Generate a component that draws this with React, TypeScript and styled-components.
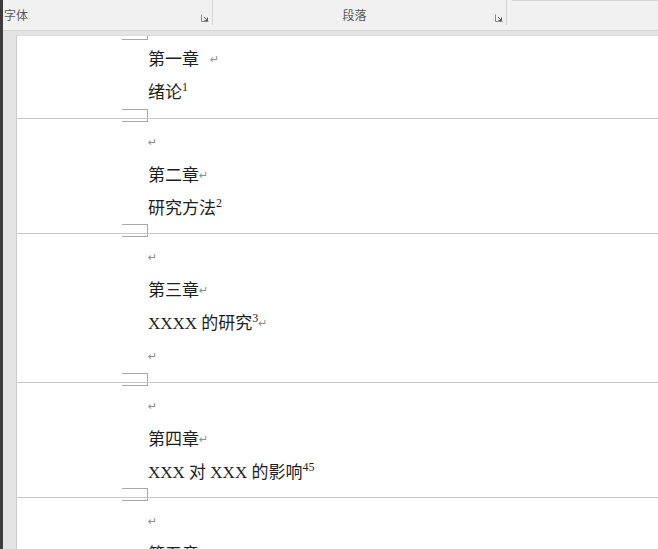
import styled, { createGlobalStyle } from "styled-components";

type Line = { text?: string; sup?: string; mark?: boolean; gap?: boolean };

const pages: Line[][] = [
    [{ text: "第一章", mark: true, gap: true }, { text: "绪论", sup: "1" }],
    [{ mark: true }, { text: "第二章", mark: true }, { text: "研究方法", sup: "2" }],
    [{ mark: true }, { text: "第三章", mark: true }, { text: "XXXX 的研究", sup: "3", mark: true }, { mark: true }],
    [{ mark: true }, { text: "第四章", mark: true }, { text: "XXX 对 XXX 的影响", sup: "45" }],
    [{ mark: true }, { text: "第五章", mark: true }],
];

const Launcher = () => (
    <LauncherIcon width="8" height="8" viewBox="0 0 8 8">
        <path d="M0.5 0.5 V7.5 H7.5" fill="none" stroke="#8a8a8a" strokeWidth="1" />
        <path d="M3 3 L6.5 6.5 M6.5 3.5 V6.5 H3.5" fill="none" stroke="#5a5a5a" strokeWidth="1" />
    </LauncherIcon>
);

const App = () => {
    return (
        <>
            <GlobalStyle />
            <Root>
                <DarkStrip />
                <Main>
                    <Ribbon>
                        <Group $width={210}>
                            <GroupLabel $align="left">字体</GroupLabel>
                            <Launcher />
                        </Group>
                        <Group $width={294}>
                            <GroupLabel $align="center">段落</GroupLabel>
                            <Launcher />
                        </Group>
                        <Gallery />
                    </Ribbon>
                    <Workspace>
                        <Document>
                            {pages.map((lines, i) => (
                                <Page key={i} $first={i === 0}>
                                    <TopCorner $first={i === 0} />
                                    {i < pages.length - 1 && <BottomCorner />}
                                    {lines.map((line, j) => (
                                        <Para key={j}>
                                            {line.text}
                                            {line.sup && <Sup>{line.sup}</Sup>}
                                            {line.mark && <Mark $gap={line.gap}>↵</Mark>}
                                        </Para>
                                    ))}
                                </Page>
                            ))}
                        </Document>
                    </Workspace>
                </Main>
            </Root>
        </>
    );
};

export default App;

// Styled-components
const GlobalStyle = createGlobalStyle`
    html, body {
        margin: 0;
        padding: 0;
        background: #e4e4e4;
        overflow: hidden;
    }
`;

const Root = styled.div`
    display: flex;
    width: 658px;
    height: 549px;
    overflow: hidden;
`;

const DarkStrip = styled.div`
    width: 3px;
    flex-shrink: 0;
    background: #3d3d3d;
`;

const Main = styled.div`
    flex: 1;
    display: flex;
    flex-direction: column;
    min-width: 0;
`;

const Ribbon = styled.div`
    display: flex;
    height: 30px;
    flex-shrink: 0;
    background: #f1f1f1;
    border-bottom: 1px solid #d4d4d4;
    box-shadow: 0 1px 0 #ececec;
`;

const Group = styled.div<{ $width: number }>`
    width: ${(p) => p.$width}px;
    height: 25px;
    display: flex;
    align-items: flex-end;
    padding-right: 3px;
    border-right: 1px solid #d6d6d6;
    box-sizing: border-box;
`;

const GroupLabel = styled.div<{ $align: string }>`
    flex: 1;
    text-align: ${(p) => p.$align};
    font-family: "Noto Sans CJK SC", sans-serif;
    font-size: 12px;
    line-height: 14px;
    color: #5a5a5a;
    padding-bottom: 3px;
    padding-left: 1px;
`;

const LauncherIcon = styled.svg`
    margin-bottom: 3px;
    flex-shrink: 0;
`;

const Gallery = styled.div`
    flex: 1;
    height: 0;
    margin-left: 5px;
    border-bottom: 1px solid #d6d6d6;
    border-left: 1px solid #d6d6d6;
`;

const Workspace = styled.div`
    flex: 1;
    background: #e4e4e4;
    padding: 4px 0 0 13px;
    overflow: hidden;
`;

const Document = styled.div`
    background: #fff;
    border-left: 1px solid #cccccc;
    height: 100%;
`;

const Page = styled.div<{ $first: boolean }>`
    position: relative;
    padding: 5px 0 10.5px 131px;
    border-top: 1px solid ${(p) => (p.$first ? "#dcdcdc" : "#c9c9c9")};
`;

const TopCorner = styled.div<{ $first: boolean }>`
    position: absolute;
    left: 105px;
    top: 0;
    width: 25px;
    height: ${(p) => (p.$first ? 3 : 2)}px;
    border-right: 1px solid #a8a8a8;
    border-bottom: 1px solid #a8a8a8;
`;

const BottomCorner = styled.div`
    position: absolute;
    left: 105px;
    bottom: 0;
    width: 25px;
    height: 8px;
    border-right: 1px solid #a8a8a8;
    border-top: 1px solid #a8a8a8;
`;

const Para = styled.div`
    height: 33px;
    display: flex;
    align-items: center;
    font-family: "Liberation Serif", "Noto Sans CJK SC", serif;
    font-size: 17px;
    color: #1e1e1e;
    white-space: pre;
`;

const Sup = styled.span`
    font-family: "Liberation Serif", serif;
    font-size: 12px;
    align-self: flex-start;
    margin-top: 6px;
`;

const Mark = styled.span<{ $gap?: boolean }>`
    font-family: "DejaVu Sans", sans-serif;
    font-size: 11px;
    color: #8c8c8c;
    margin-left: ${(p) => (p.$gap ? 11 : 0)}px;
    margin-top: 4px;
`;
